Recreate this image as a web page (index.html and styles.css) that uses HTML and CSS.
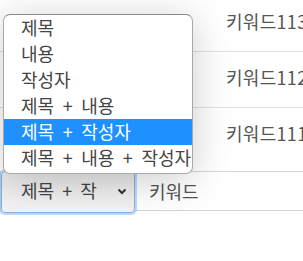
FILE: index.html
```html
<!DOCTYPE html>
<html lang="ko">
<head>
<meta charset="utf-8">
<link rel="stylesheet" href="styles.css">
</head>
<body>
<div class="page">
  <div class="list">
    <div class="row first"><span class="cell">키워드113</span></div>
    <div class="row"><span class="cell">키워드112</span></div>
    <div class="row last"><span class="cell">키워드111</span></div>
  </div>
  <form class="search">
    <div class="select">
      <span class="select-text">제목 + 작</span>
      <svg class="chev" width="10" height="7" viewBox="0 0 10 7"><path d="M1.5 1.5 L5 5 L8.5 1.5" fill="none" stroke="#333" stroke-width="2"/></svg>
    </div>
    <div class="input">키워드</div>
  </form>
  <ul class="menu">
    <li>제목</li>
    <li>내용</li>
    <li>작성자</li>
    <li>제목 + 내용</li>
    <li class="active">제목 + 작성자</li>
    <li>제목 + 내용 + 작성자</li>
  </ul>
</div>
</body>
</html>
```

FILE: styles.css
```css
html, body {
  margin: 0;
  padding: 0;
  background: #fff;
}
body {
  font-family: "Noto Sans CJK KR", "Noto Sans", sans-serif;
  font-size: 18px;
  color: #444;
  width: 303px;
  height: 261px;
  overflow: hidden;
}
.page {
  position: relative;
  width: 303px;
  height: 261px;
  overflow: hidden;
}
.list {
  margin-top: -4px;
}
.row {
  height: 55px;
  border-bottom: 1px solid #dee2e6;
  display: flex;
  align-items: center;
  padding-left: 226px;
  box-sizing: content-box;
  white-space: nowrap;
}
.row.last {
  border-bottom: none;
  height: 56px;
}
.cell {
  line-height: 20px;
  margin-top: -6px;
  color: #555;
  letter-spacing: 0.3px;
}
.search {
  display: flex;
  margin: 7px 0 0 0;
  height: 41px;
  border-left: 1px solid #dfe3e8;
}
.select {
  width: 134px;
  box-sizing: border-box;
  height: 42px;
  border: 1px solid #80b0e8;
  border-radius: 4px;
  box-shadow: 0 0 0 2px rgba(120, 170, 235, 0.45);
  background: linear-gradient(#e9e9e9, #f3f3f3);
  display: flex;
  align-items: center;
  padding-left: 19px;
  padding-right: 7px;
  position: relative;
  z-index: 1;
  color: #444;
}
.select-text {
  flex: 1;
  margin-top: -4px;
  white-space: nowrap;
  overflow: hidden;
  word-spacing: 3px;
}
.chev {
  margin-top: -2px;
  flex: none;
}
.input {
  flex: 1;
  border-top: 1px solid #d2d6dc;
  border-bottom: 1px solid #d2d6dc;
  height: 40px;
  box-sizing: border-box;
  display: flex;
  align-items: center;
  padding-left: 14px;
  color: #555;
  background: #fff;
}
.menu {
  position: absolute;
  left: 3px;
  top: 14px;
  width: 190px;
  box-sizing: border-box;
  margin: 0;
  padding: 0 0 2px 0;
  list-style: none;
  background: #fff;
  border: 1px solid #a9a9a9;
  border-top-color: #8a8a8a;
  border-radius: 7px;
  box-shadow: 0 6px 40px rgba(0, 0, 0, 0.2);
  overflow: hidden;
  z-index: 5;
}
.menu li {
  height: 26px;
  line-height: 25px;
  padding-left: 17px;
  white-space: nowrap;
  color: #444;
  word-spacing: 3.5px;
}
.menu li.active {
  background: #1e90ff;
  color: #fff;
}
```
